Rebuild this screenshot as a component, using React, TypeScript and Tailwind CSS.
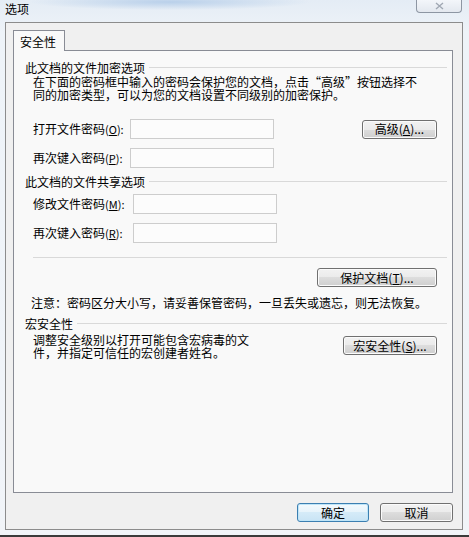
import React from 'react';

const font = "font-['Noto_Sans_CJK_SC','Noto_Sans_CJK_JP',sans-serif]";

const Btn = ({ children, w, primary }: { children: React.ReactNode; w: string; primary?: boolean }) => (
  <div
    className={`${w} h-[19px] rounded-[3px] border flex items-center justify-center text-[12px] leading-none text-black ${
      primary
        ? 'border-[#3c7fb1] bg-[linear-gradient(#f4fafd_0%,#e6f3fb_50%,#d5ebf8_50%,#c9e4f5_100%)] shadow-[inset_0_0_0_1px_#bfe5f8]'
        : 'border-[#707070] bg-[linear-gradient(#f2f2f2_0%,#ebebeb_50%,#dddddd_50%,#cfcfcf_100%)] shadow-[inset_0_0_0_1px_#fbfbfb]'
    }`}
  >
    {children}
  </div>
);

const Input = () => <div className="w-[144px] h-[20px] border border-[#cdcdcd] bg-[#fcfcfc]" />;

const GroupTitle = ({ children, mt }: { children: React.ReactNode; mt: string }) => (
  <div className={`${mt} flex items-center h-[13px] pr-[5px]`}>
    <span className="text-[12px] leading-[13px]">{children}</span>
    <div className="flex-1 h-px bg-[#d9d9d9] ml-[4px]" />
  </div>
);

const Label = ({ text, k, w }: { text: string; k: string; w: string }) => (
  <div className={`${w} text-[12px] leading-none`}>
    {text}
    <span className="text-[11px]">
      (<span className="underline">{k}</span>):
    </span>
  </div>
);

export default function App() {
  return (
    <div
      className={`${font} w-[469px] h-[537px] flex flex-col text-black bg-[linear-gradient(180deg,#e4ecf5_0%,#eef3f8_6%,#f1f4f8_100%)] overflow-hidden`}
    >
      {/* title bar */}
      <div className="h-[22px] flex items-start bg-[radial-gradient(ellipse_140px_8px_at_170px_2px,#b9d0ea,transparent)]">
        <span className="ml-[5px] mt-[2px] text-[12px] leading-[13px]">选项</span>
        <div className="ml-auto mr-[7px] w-[46px] h-[13px] border border-t-0 border-[#8d96a3] rounded-b-[4px] bg-[linear-gradient(#f3f6fa,#e3e8ef)] flex items-center justify-center">
          <svg width="11" height="8" viewBox="0 0 11 8" fill="none" stroke="#a0a8b3" strokeWidth="1.4">
            <path d="M2 1 L9 7 M9 1 L2 7" />
          </svg>
        </div>
      </div>

      {/* client area */}
      <div className="ml-[5px] w-[458px] h-[508px] border border-[#8c8c8c] bg-[#f0f0f0] flex flex-col pl-[7px] pt-[7px]">
        <div className="w-[52px] h-[21px] border border-b-0 border-[#898c95] bg-[#f9f9f9] -mb-px relative z-10 pl-[6px] pt-[4px] text-[12px] leading-[13px]">
          安全性
        </div>

        <div className="w-[440px] h-[443px] border border-[#898c95] bg-[#f9f9f9] flex flex-col pl-[11px] text-[12px]">
          <GroupTitle mt="mt-[10px]">此文档的文件加密选项</GroupTitle>
          <p className="ml-[8px] mt-[1px] leading-[13px]">
            在下面的密码框中输入的密码会保护您的文档，点击“高级”按钮选择不
            <br />
            同的加密类型，可以为您的文档设置不同级别的加密保护。
          </p>
          <div className="mt-[18px] ml-[8px] flex items-center h-[20px]">
            <Label text="打开文件密码" k="O" w="w-[97px]" />
            <Input />
            <div className="ml-auto mr-[15px]">
              <Btn w="w-[75px]">
                高级(<span className="underline">A</span>)...
              </Btn>
            </div>
          </div>
          <div className="mt-[9px] ml-[8px] flex items-center h-[20px]">
            <Label text="再次键入密码" k="P" w="w-[97px]" />
            <Input />
          </div>

          <GroupTitle mt="mt-[7px]">此文档的文件共享选项</GroupTitle>
          <div className="mt-[6px] ml-[8px] flex items-center h-[20px]">
            <Label text="修改文件密码" k="M" w="w-[100px]" />
            <Input />
          </div>
          <div className="mt-[9px] ml-[8px] flex items-center h-[20px]">
            <Label text="再次键入密码" k="R" w="w-[100px]" />
            <Input />
          </div>

          <div className="mt-[14px] ml-[8px] mr-[5px] h-px bg-[#d9d9d9]" />
          <div className="mt-[10px] self-end mr-[15px]">
            <Btn w="w-[120px]">
              保护文档(<span className="underline">T</span>)...
            </Btn>
          </div>
          <p className="mt-[9px] ml-[6px] leading-[13px]">
            注意：密码区分大小写，请妥善保管密码，一旦丢失或遗忘，则无法恢复。
          </p>

          <GroupTitle mt="mt-[8px]">宏安全性</GroupTitle>
          <div className="mt-[3px] ml-[8px] flex items-start">
            <p className="leading-[13px]">
              调整安全级别以打开可能包含宏病毒的文
              <br />
              件，并指定可信任的宏创建者姓名。
            </p>
            <div className="ml-auto mr-[15px] mt-[3px]">
              <Btn w="w-[94px]">
                宏安全性(<span className="underline">S</span>)...
              </Btn>
            </div>
          </div>
        </div>

        <div className="mt-[10px] flex gap-[11px] pl-[284px]">
          <Btn w="w-[72px]" primary>
            确定
          </Btn>
          <Btn w="w-[73px]">取消</Btn>
        </div>
      </div>

      <div className="mt-auto h-[2px] bg-[#3a3a3a]" />
    </div>
  );
}
